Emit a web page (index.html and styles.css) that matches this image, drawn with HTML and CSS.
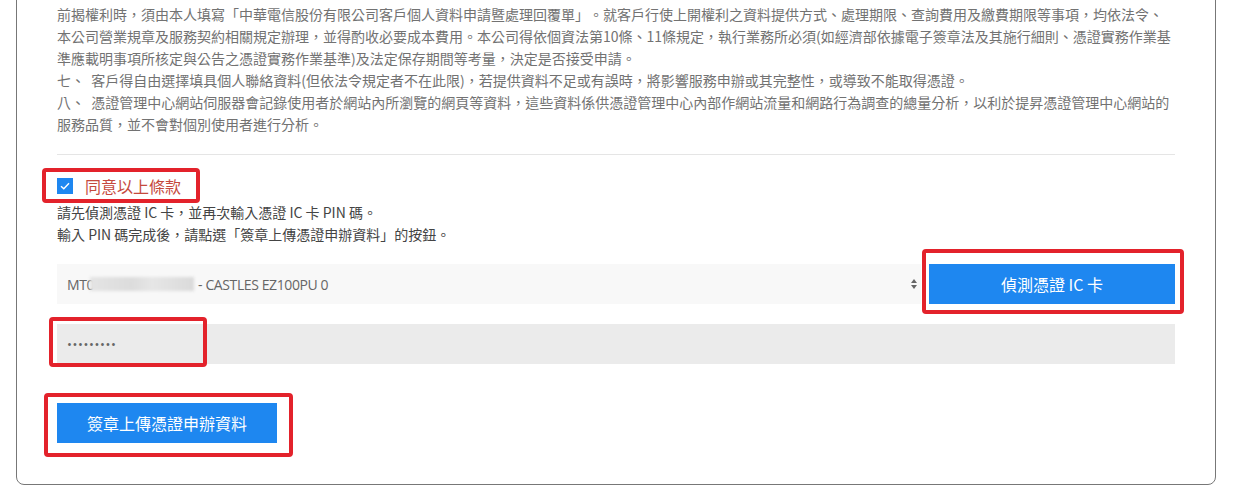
FILE: index.html
```html
<!DOCTYPE html>
<html lang="zh-Hant">
<head>
    <meta charset="UTF-8">
    <title>憑證申辦</title>
    <link rel="stylesheet" href="styles.css">
</head>
<body>

<div class="card">
    <p class="terms">前揭權利時，須由本人填寫「中華電信股份有限公司客戶個人資料申請暨處理回覆單」。就客戶行使上開權利之資料提供方式、處理期限、查詢費用及繳費期限等事項，均依法令、本公司營業規章及服務契約相關規定辦理，並得酌收必要成本費用。本公司得依個資法第10條、11條規定，執行業務所必須(如經濟部依據電子簽章法及其施行細則、憑證實務作業基準應載明事項所核定與公告之憑證實務作業基準)及法定保存期間等考量，決定是否接受申請。<br>七、&nbsp;&nbsp;客戶得自由選擇填具個人聯絡資料(但依法令規定者不在此限)，若提供資料不足或有誤時，將影響服務申辦或其完整性，或導致不能取得憑證。<br>八、&nbsp;&nbsp;憑證管理中心網站伺服器會記錄使用者於網站內所瀏覽的網頁等資料，這些資料係供憑證管理中心內部作網站流量和網路行為調查的總量分析，以利於提昇憑證管理中心網站的服務品質，並不會對個別使用者進行分析。</p>

    <hr class="divider">

    <div class="agree">
        <label class="agree-box">
            <span class="tick">
                <svg width="16" height="16" viewBox="0 0 16 16"><polyline points="4,8.2 6.8,10.8 12,5.2" fill="none" stroke="#fff" stroke-width="1.4"/></svg>
            </span>
            <span class="agree-text">同意以上條款</span>
            <span class="mark mark-agree"></span>
        </label>
    </div>

    <p class="guide">請先偵測憑證 IC 卡，並再次輸入憑證 IC 卡 PIN 碼。<br>輸入 PIN 碼完成後，請點選「簽章上傳憑證申辦資料」的按鈕。</p>

    <div class="reader-row">
        <div class="reader-select">
            <span>MT0</span><span class="blur"></span><span>- CASTLES EZ100PU 0</span>
            <svg class="arrows" width="6" height="10" viewBox="0 0 6 10"><polygon points="3,0 6,4 0,4" fill="#666"/><polygon points="0,6 6,6 3,10" fill="#666"/></svg>
        </div>
        <div class="detect-wrap">
            <button class="btn btn-detect">偵測憑證 IC 卡</button>
            <span class="mark mark-detect"></span>
        </div>
    </div>

    <div class="pin-wrap">
        <input class="pin" type="password" value="123456789">
        <span class="mark mark-pin"></span>
    </div>

    <div class="submit-wrap">
        <button class="btn btn-submit">簽章上傳憑證申辦資料</button>
        <span class="mark mark-submit"></span>
    </div>
</div>

</body>
</html>
```

FILE: styles.css
```css
body {
    margin: 0;
    background: #fff;
    font-family: "Noto Sans CJK TC", sans-serif;
    text-spacing-trim: space-all;
    overflow: hidden;
}

.card {
    width: 1118px;
    margin: -12px 0 0 16px;
    padding: 14px 40px 41px;
    border: 1px solid #777;
    border-radius: 8px;
}

.terms {
    margin: 0;
    font-size: 14px;
    line-height: 22px;
    color: #727272;
}

.divider {
    margin: 19px 0 0;
    border: 0;
    border-top: 1px solid #e5e5e5;
}

.agree {
    margin-top: 19px;
    height: 24px;
    display: flex;
    align-items: center;
}
.agree-box {
    position: relative;
    display: inline-flex;
    align-items: center;
    gap: 12px;
    height: 24px;
}
.tick {
    width: 16px;
    height: 16px;
    background: #1e87f0;
    display: block;
}
.tick svg {
    display: block;
}
.agree-text {
    font-size: 16px;
    line-height: 24px;
    color: #c5493d;
}

.guide {
    margin: 3px 0 0;
    font-size: 14px;
    line-height: 22px;
    color: #444;
}

.reader-row {
    margin-top: 19px;
    display: flex;
    gap: 8px;
}
.reader-select {
    flex: 1;
    height: 40px;
    display: flex;
    align-items: center;
    padding: 0 4px 0 10px;
    background: #f8f8f8;
    font-family: "Open Sans", sans-serif;
    font-size: 14px;
    letter-spacing: -0.4px;
    color: #666;
}
.blur {
    display: inline-block;
    width: 104px;
    height: 14px;
    margin: 0 4px 0 -4px;
    background: linear-gradient(90deg, #e4e4e4, #dcdcdc 40%, #e6e6e6 60%, #dadada);
    filter: blur(1.5px);
}
.arrows {
    margin-left: auto;
}

.detect-wrap {
    position: relative;
    width: 246px;
}

.btn {
    display: block;
    height: 40px;
    border: 0;
    background: #1e87f0;
    color: #fff;
    font-family: "Noto Sans CJK TC", sans-serif;
    font-size: 16px;
    cursor: pointer;
}
.btn-detect {
    width: 100%;
}
.btn-submit {
    padding: 0 30px;
}

.pin-wrap {
    position: relative;
    margin-top: 20px;
}
.pin {
    display: block;
    box-sizing: border-box;
    width: 100%;
    height: 40px;
    padding: 0 10px;
    border: 0;
    background: #ebebeb;
    color: #666;
    font-family: "Open Sans", sans-serif;
    font-size: 13px;
    letter-spacing: 0.6px;
    outline: none;
}

.submit-wrap {
    position: relative;
    display: inline-block;
    margin-top: 39px;
}

/* red highlight frames */
.mark {
    position: absolute;
    border: 4px solid #e3222b;
    border-radius: 4px;
    pointer-events: none;
}
.mark-agree {
    left: -15px;
    right: -19px;
    top: -6px;
    bottom: -5px;
}
.mark-detect {
    left: -7px;
    right: -9px;
    top: -15px;
    bottom: -10px;
}
.mark-pin {
    left: -8px;
    top: -7px;
    width: 158px;
    height: 50px;
    box-sizing: border-box;
}
.mark-submit {
    left: -13px;
    right: -16px;
    top: -10px;
    bottom: -14px;
}
```
